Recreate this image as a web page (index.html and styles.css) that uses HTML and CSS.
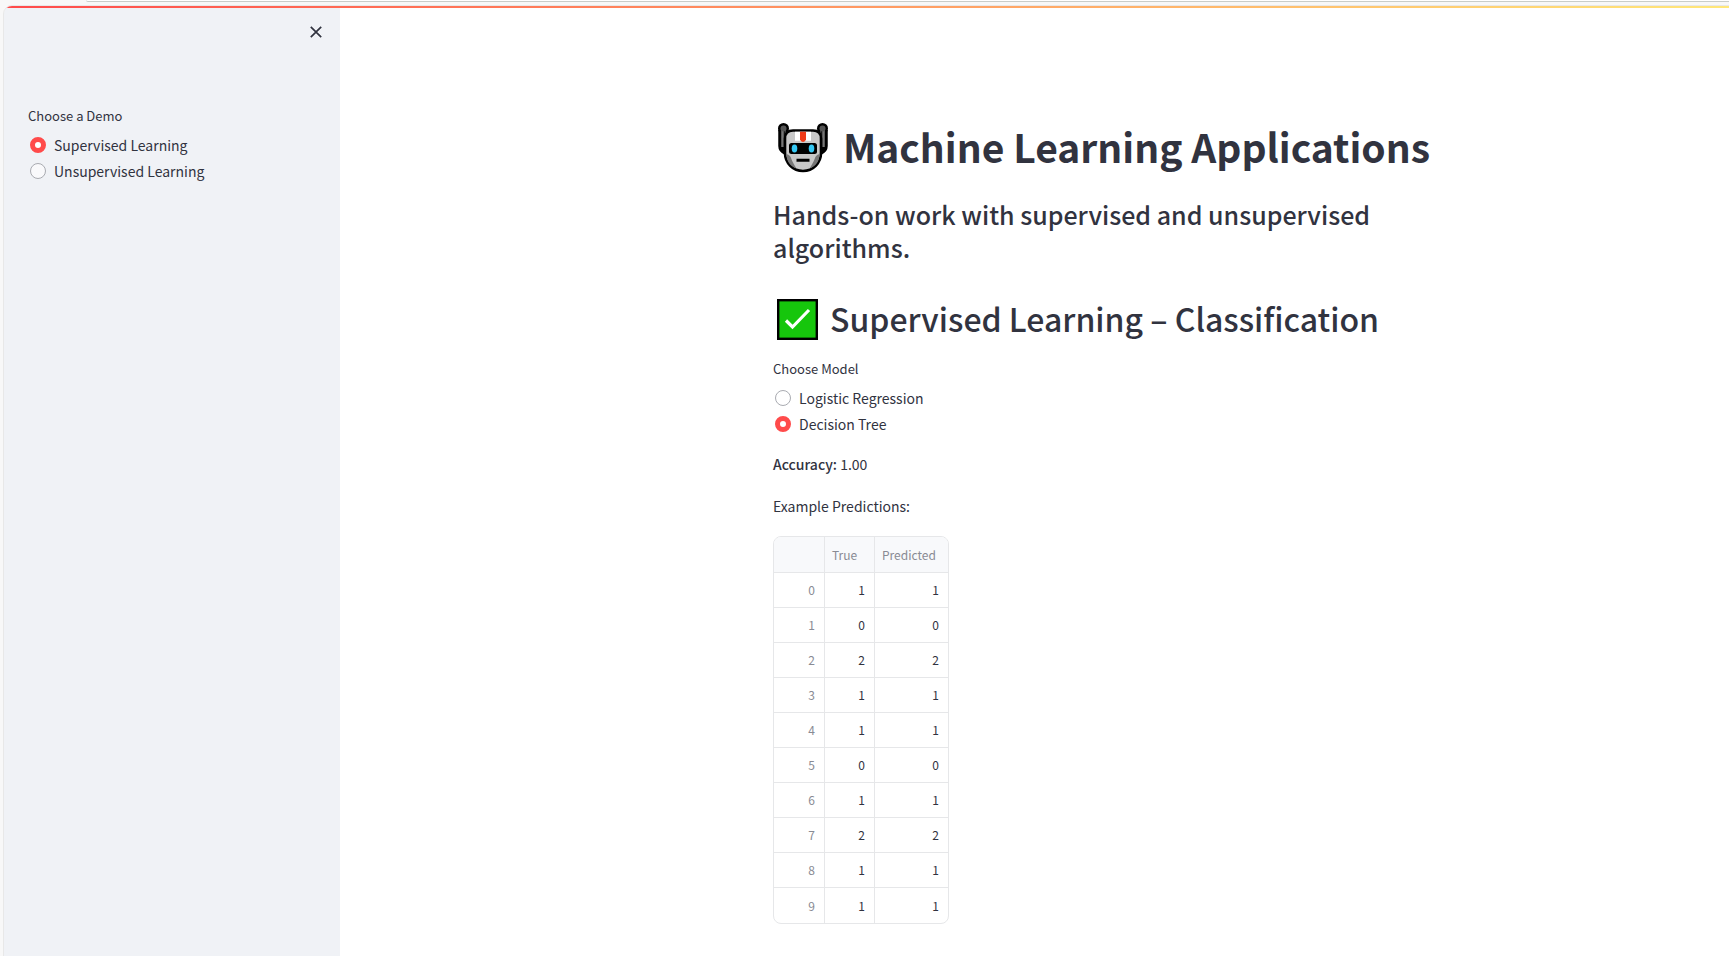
FILE: index.html
```html
<!DOCTYPE html>
<html lang="en">
<head>
<meta charset="utf-8">
<title>Machine Learning Applications</title>
<link rel="stylesheet" href="styles.css">
</head>
<body>
<div class="chrome"><div class="omnibox"></div></div>
<div class="app">
  <div class="decoration"></div>
  <aside class="sidebar">
    <div class="sidebar-top">
      <button class="close" type="button" aria-label="Close sidebar">
        <svg width="12" height="12" viewBox="0 0 12 12"><path d="M.8.8 11.2 11.2M11.2.8.8 11.2" fill="none" stroke="#31333f" stroke-width="1.7"/></svg>
      </button>
    </div>
    <fieldset class="radio-group">
      <legend>Choose a Demo</legend>
      <label class="option"><input type="radio" name="demo" checked>Supervised Learning</label>
      <label class="option"><input type="radio" name="demo">Unsupervised Learning</label>
    </fieldset>
  </aside>
  <main class="main">
    <div class="block">
      <h1>
        <svg class="robot" viewBox="0 0 50 50" aria-hidden="true">
          <path d="M3.500 7v16q0 3.500 4 5.500M46.500 7v16q0 3.500-4 5.500" fill="none" stroke="#000" stroke-width="6.500"/>
          <circle cx="5.500" cy="5.500" r="5.500"/><circle cx="44.500" cy="5.500" r="5.500"/>
          <path d="M6 5v19l4 4V13q-2-4-2-7zM44 5v19l-4 4V13q2-4 2-7z" fill="#666" stroke="#000" stroke-width="1.500"/>
          <path d="M4.500 6v18M45.500 6v18" stroke="#777" stroke-width="2.500"/>
          <circle cx="5.500" cy="5.500" r="3" fill="#555"/><circle cx="44.500" cy="5.500" r="3" fill="#555"/>
          <path d="M15 7.500h20q8 0 8 8V30c0 10-8 18-18 18S7 40 7 30V15.500q0-8 8-8z" fill="#c8c8c8" stroke="#000" stroke-width="2.600"/>
          <path d="M8.400 31c3 1 4 2 5 5s3 6 5 9.500C12 43 8.400 38 8.400 31zM41.600 31c-3 1-4 2-5 5s-3 6-5 9.500c6.400-2.500 10-7.500 10-14.500z" fill="#777"/>
          <path d="M17 8.800h16v9H17z" fill="#fff"/>
          <path d="M22 8.800h6v8q-3 4.500-6 0z" fill="#f03a17"/>
          <rect x="11" y="20" width="28" height="11" rx="2.500"/>
          <ellipse cx="16.500" cy="25.500" rx="2.800" ry="4" fill="#35c8f4"/><ellipse cx="33.500" cy="25.500" rx="2.800" ry="4" fill="#35c8f4"/>
          <path d="M18.500 37.300h13" stroke="#000" stroke-width="3"/>
        </svg>
        <span>Machine Learning Applications</span>
      </h1>
      <h3>Hands-on work with supervised and unsupervised algorithms.</h3>
      <h2>
        <svg class="check" viewBox="0 0 41 41" aria-hidden="true">
          <rect x="1.200" y="1.200" width="38.600" height="38.600" fill="#16c60c" stroke="#000" stroke-width="2.400"/>
          <path d="M9 21.500l6.500 6.500L32 11" fill="none" stroke="#fff" stroke-width="3.200"/>
        </svg>
        <span>Supervised Learning – Classification</span>
      </h2>
      <fieldset class="radio-group">
        <legend>Choose Model</legend>
        <label class="option"><input type="radio" name="model">Logistic Regression</label>
        <label class="option"><input type="radio" name="model" checked>Decision Tree</label>
      </fieldset>
      <p><strong>Accuracy:</strong> 1.00</p>
      <p>Example Predictions:</p>
      <div class="frame">
        <table>
          <thead><tr><th class="index" aria-label="Index"></th><th class="true">True</th><th class="predicted">Predicted</th></tr></thead>
          <tbody>
            <tr><th>0</th><td>1</td><td>1</td></tr>
            <tr><th>1</th><td>0</td><td>0</td></tr>
            <tr><th>2</th><td>2</td><td>2</td></tr>
            <tr><th>3</th><td>1</td><td>1</td></tr>
            <tr><th>4</th><td>1</td><td>1</td></tr>
            <tr><th>5</th><td>0</td><td>0</td></tr>
            <tr><th>6</th><td>1</td><td>1</td></tr>
            <tr><th>7</th><td>2</td><td>2</td></tr>
            <tr><th>8</th><td>1</td><td>1</td></tr>
            <tr><th>9</th><td>1</td><td>1</td></tr>
          </tbody>
        </table>
      </div>
    </div>
  </main>
</div>
</body>
</html>
```
FILE: styles.css
```css
* { box-sizing: border-box; }

body {
  margin: 0;
  min-height: 100vh;
  display: flex;
  flex-direction: column;
  background: #f8f8f8;
  color: #31333f;
  font-family: "Noto Sans CJK SC", "Noto Sans", sans-serif;
  font-size: 14px;
  line-height: 26px;
}

.chrome { height: 6px; padding-left: 86px; }
.omnibox {
  height: 2px;
  background: #fff;
  border-bottom: 1px solid #c8ccc9;
  border-bottom-left-radius: 6px;
}

.app {
  position: relative;
  flex: 1;
  display: flex;
  margin-left: 4px;
  background: #fff;
  border-top-left-radius: 8px;
  overflow: hidden;
  outline: 1px solid #e8e8e8;
}

.decoration {
  position: absolute;
  top: 0;
  left: 0;
  right: 0;
  height: 2px;
  background: linear-gradient(90deg, #ff4b4b, #fffd80 114%);
}

.sidebar {
  flex: 0 0 336px;
  padding: 16px 24px;
  background: #f0f2f6;
}
.sidebar-top {
  display: flex;
  justify-content: flex-end;
  height: 81px;
  margin-right: -10px;
}
.close {
  display: flex;
  align-items: center;
  justify-content: center;
  width: 20px;
  height: 20px;
  padding: 0;
  border: 0;
  background: none;
}

.main { flex: 1; min-width: 0; padding: 111px 16px 32px min(433px, 26vw); }
.block { max-width: 704px; }

h1, h2, h3, p { margin: 0; }
h1, h2 { display: flex; align-items: center; white-space: nowrap; }
h1 { gap: 15px; padding-left: 5px; font-size: 39px; line-height: 58px; font-weight: 700; }
h1 span { padding-bottom: 4px; }
h3 { margin-top: 19px; max-width: 640px; font-size: 25px; line-height: 33px; font-weight: 500; }
h2 { gap: 12px; margin-top: 33px; padding-left: 4px; font-size: 32px; line-height: 42px; font-weight: 500; }
h2 span { padding-bottom: 2px; }
.robot { width: 50px; height: 50px; }
.check { width: 41px; height: 41px; }

.radio-group { display: flex; flex-direction: column; margin: 0; padding: 0; border: 0; }
.radio-group legend { padding: 0; margin-bottom: 3px; font-size: 13px; }
h2 + .radio-group { margin-top: 15px; }
.option { display: flex; align-items: center; gap: 8px; padding-left: 2px; }
.option input {
  appearance: none;
  width: 16px;
  height: 16px;
  margin: 0;
  border: 1px solid #a9abb1;
  border-radius: 50%;
  background: #fff;
}
.sidebar .option input { background: #f9f9fb; }
.option input:checked,
.sidebar .option input:checked { border: 5px solid #ff4b4b; background: #fff; }

p { margin-top: 14px; }
p + p { margin-top: 16px; }
strong { font-weight: 500; }

.frame {
  width: fit-content;
  margin-top: 17px;
  border: 1px solid #e6e7e9;
  border-radius: 8px;
  overflow: hidden;
}
table { border-collapse: separate; border-spacing: 0; font-size: 12px; line-height: 18px; }
th, td {
  height: 35px;
  padding: 0 9px;
  border-right: 1px solid #e6e7e9;
  border-bottom: 1px solid #e6e7e9;
  font-weight: 400;
  text-align: right;
}
th { color: #898b94; }
thead th { height: 36px; padding: 0 7px; background: #f8f9fb; text-align: left; }
tr > :last-child { border-right: 0; }
tbody tr:last-child > * { border-bottom: 0; }
.index { width: 51px; }
.true { width: 50px; }
.predicted { width: 73px; }
```
